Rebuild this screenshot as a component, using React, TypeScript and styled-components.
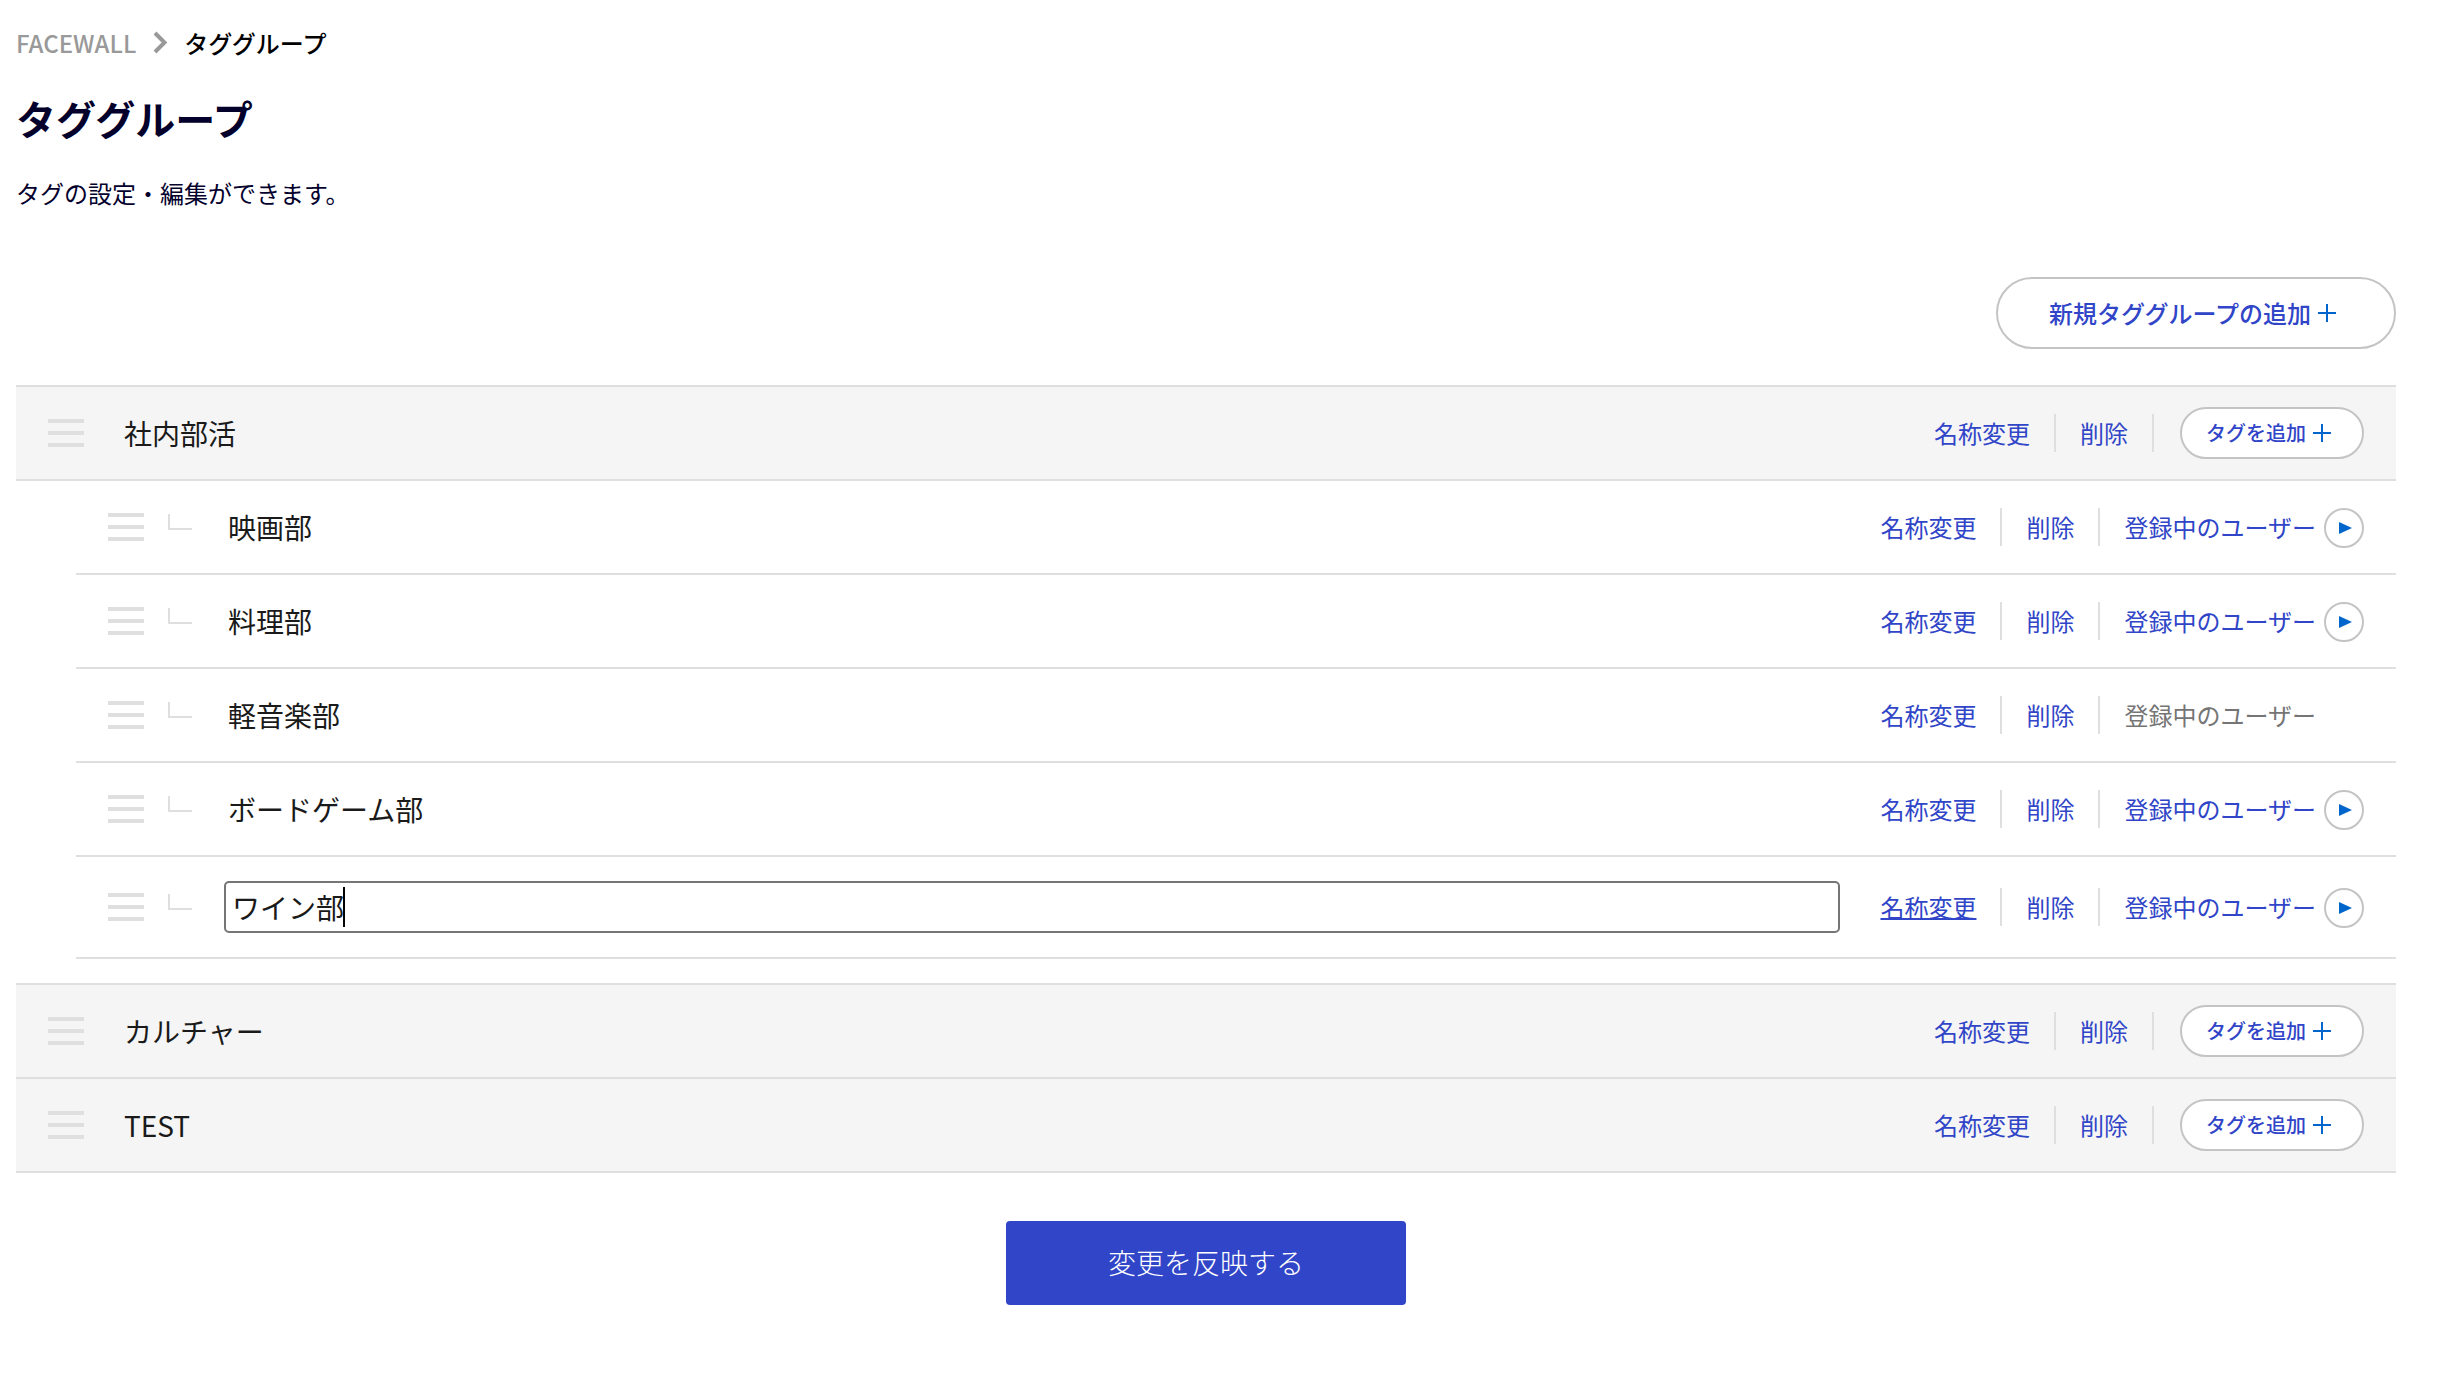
import React, { useState } from "react";
import styled, { createGlobalStyle, css } from "styled-components";

const color = {
  ink: "#1a1a1a",
  navy: "#03002c",
  link: "#3045c7",
  accent: "#0066cc",
  primary: "#3045c7",
  line: "#dfdfdf",
  pill: "#c4c4c4",
  groupBg: "#f5f5f5",
  muted: "#757575",
  crumb: "#999999",
};

const GlobalStyle = createGlobalStyle`
  *, *::before, *::after { box-sizing: border-box; }
  body {
    margin: 0;
    background: #fff;
    color: ${color.ink};
    font-family: "Noto Sans CJK JP", "Noto Sans", sans-serif;
    font-size: 24px;
    line-height: 36px;
  }
  button, input { font: inherit; }
`;

const Page = styled.main`
  padding: 25px 42px 90px 16px;
`;

const Breadcrumb = styled.nav`
  display: flex;
  align-items: center;
  gap: 16px;
  font-weight: 500;
`;

const CrumbLink = styled.a`
  color: ${color.crumb};
  text-decoration: none;
`;

const CrumbCurrent = styled.span`
  color: #000;
`;

const Title = styled.h1`
  margin: 27px 0;
  color: ${color.navy};
  font-size: 40px;
  font-weight: 700;
  line-height: 60px;
`;

const Lead = styled.p`
  margin: 0;
  color: ${color.navy};
`;

const Toolbar = styled.div`
  display: flex;
  justify-content: flex-end;
  margin: 66px 0 36px;
`;

const PillButton = styled.button<{ $large?: boolean }>`
  display: inline-flex;
  align-items: center;
  justify-content: center;
  width: ${(p) => (p.$large ? 400 : 184)}px;
  height: ${(p) => (p.$large ? 72 : 52)}px;
  margin-left: ${(p) => (p.$large ? 0 : 2)}px;
  padding: 0;
  border: 2px solid ${color.pill};
  border-radius: 36px;
  background: #fff;
  color: ${color.link};
  font-size: ${(p) => (p.$large ? 24 : 20)}px;
  font-weight: 500;
  white-space: nowrap;
  cursor: pointer;

  svg {
    margin: 0 7px;
  }
`;

const List = styled.ul`
  margin: 0;
  padding: 0;
  list-style: none;
`;

const GroupList = styled(List)`
  border-bottom: 2px solid ${color.line};
`;

const TagList = styled(List)`
  padding: 0 0 24px 60px;
`;

const rowBase = css`
  display: flex;
  align-items: center;
  min-height: 94px;
  padding: 0 32px;
`;

const GroupRow = styled.div`
  ${rowBase}
  gap: 40px;
  border-top: 2px solid ${color.line};
  background: ${color.groupBg};
`;

const TagRow = styled.div<{ $editing?: boolean }>`
  ${rowBase}
  gap: 24px;
  min-height: ${(p) => (p.$editing ? 102 : 94)}px;
  border-bottom: 2px solid ${color.line};
`;

const GroupTags = styled.div`
  border-top: 2px solid ${color.line};
`;

const Handle = styled.button`
  display: flex;
  flex: none;
  flex-direction: column;
  gap: 8px;
  width: 36px;
  padding: 0;
  border: 0;
  background: none;
  cursor: grab;
`;

const HandleBar = styled.span`
  height: 4px;
  width: 100%;
  background: ${color.line};
`;

const Elbow = styled.span`
  flex: none;
  width: 24px;
  height: 16px;
  margin-bottom: 10px;
  border-left: 2px solid ${color.line};
  border-bottom: 2px solid ${color.line};
`;

const Name = styled.span<{ $indent?: boolean }>`
  flex: 1;
  padding-left: ${(p) => (p.$indent ? 12 : 0)}px;
  font-size: 28px;
  line-height: 40px;
`;

const Field = styled.div`
  position: relative;
  flex: 1;
  margin: 0 16px 0 8px;
`;

const NameInput = styled.input`
  display: block;
  width: 100%;
  height: 52px;
  padding: 0 6px;
  border: 2px solid ${color.muted};
  border-radius: 5px;
  outline: 0;
  background: #fff;
  color: ${color.ink};
  font-size: 28px;
  line-height: 40px;
  caret-color: transparent;
`;

/* Sits right after the typed text: an invisible copy of it sets the place. */
const CaretTrack = styled.span`
  position: absolute;
  top: 6px;
  left: 7px;
  height: 40px;
  border-right: 2px solid #000;
  pointer-events: none;
`;

const HiddenCopy = styled.span`
  visibility: hidden;
  font-size: 28px;
  white-space: pre;
`;

const Actions = styled.div`
  display: flex;
  flex: none;
  align-items: center;
  gap: 24px;
`;

const Divider = styled.span`
  width: 2px;
  height: 38px;
  background: ${color.line};
`;

const TextButton = styled.button<{ $active?: boolean }>`
  padding: 0;
  border: 0;
  background: none;
  color: ${color.link};
  white-space: nowrap;
  text-decoration: ${(p) => (p.$active ? "underline" : "none")};
  text-decoration-thickness: 2px;
  cursor: pointer;
`;

const UsersLink = styled.a`
  display: flex;
  align-items: center;
  gap: 8px;
  color: ${color.link};
  text-decoration: none;
  white-space: nowrap;
`;

const UsersNone = styled.span`
  padding-right: 48px;
  color: ${color.muted};
  white-space: nowrap;
`;

const PlayCircle = styled.span`
  display: flex;
  align-items: center;
  justify-content: center;
  width: 40px;
  height: 40px;
  margin-top: 2px;
  padding-left: 2px;
  border: 2px solid ${color.pill};
  border-radius: 50%;
`;

const Footer = styled.div`
  display: flex;
  justify-content: center;
  margin-top: 48px;
`;

const SubmitButton = styled.button`
  width: 400px;
  height: 84px;
  padding: 0 0 2px;
  border: 0;
  border-radius: 4px;
  background: ${color.primary};
  color: #fff;
  font-size: 28px;
  font-weight: 300;
  cursor: pointer;
`;

const Plus = () => (
  <svg width="18" height="18" viewBox="0 0 18 18" aria-hidden="true">
    <path d="M9 0V18M0 9H18" stroke={color.accent} strokeWidth="2" />
  </svg>
);

const Chevron = () => (
  <svg width="16" height="24" viewBox="0 0 16 24" aria-hidden="true">
    <path d="M3 2L12.5 11.5L3 21" fill="none" stroke={color.crumb} strokeWidth="4" />
  </svg>
);

const Play = () => (
  <svg width="13" height="12" viewBox="0 0 13 12" aria-hidden="true">
    <path d="M0 0L13 6L0 12Z" fill={color.accent} />
  </svg>
);

const DragHandle = () => (
  <Handle type="button" aria-label="並べ替え">
    <HandleBar />
    <HandleBar />
    <HandleBar />
  </Handle>
);

type Tag = { name: string; hasUsers: boolean };
type Group = { name: string; tags: Tag[] };

const groups: Group[] = [
  {
    name: "社内部活",
    tags: [
      { name: "映画部", hasUsers: true },
      { name: "料理部", hasUsers: true },
      { name: "軽音楽部", hasUsers: false },
      { name: "ボードゲーム部", hasUsers: true },
      { name: "ワイン部", hasUsers: true },
    ],
  },
  { name: "カルチャー", tags: [] },
  { name: "TEST", tags: [] },
];

function TagItem({ tag, editing, onEdit }: { tag: Tag; editing: boolean; onEdit: () => void }) {
  const [name, setName] = useState(tag.name);
  return (
    <li>
      <TagRow $editing={editing}>
        <DragHandle />
        <Elbow />
        {editing ? (
          <Field>
            <NameInput aria-label="タグ名" value={name} onChange={(e) => setName(e.target.value)} />
            <CaretTrack aria-hidden="true">
              <HiddenCopy>{name}</HiddenCopy>
            </CaretTrack>
          </Field>
        ) : (
          <Name $indent>{name}</Name>
        )}
        <Actions>
          <TextButton type="button" $active={editing} onClick={onEdit}>
            名称変更
          </TextButton>
          <Divider />
          <TextButton type="button">削除</TextButton>
          <Divider />
          {tag.hasUsers ? (
            <UsersLink href="#users">
              登録中のユーザー
              <PlayCircle>
                <Play />
              </PlayCircle>
            </UsersLink>
          ) : (
            <UsersNone>登録中のユーザー</UsersNone>
          )}
        </Actions>
      </TagRow>
    </li>
  );
}

export default function App() {
  const [editing, setEditing] = useState("ワイン部");
  return (
    <>
      <GlobalStyle />
      <Page>
        <Breadcrumb aria-label="パンくず">
          <CrumbLink href="#facewall">FACEWALL</CrumbLink>
          <Chevron />
          <CrumbCurrent aria-current="page">タググループ</CrumbCurrent>
        </Breadcrumb>
        <Title>タググループ</Title>
        <Lead>タグの設定・編集ができます。</Lead>
        <Toolbar>
          <PillButton type="button" $large>
            新規タググループの追加
            <Plus />
          </PillButton>
        </Toolbar>
        <GroupList>
          {groups.map((group) => (
            <li key={group.name}>
              <GroupRow>
                <DragHandle />
                <Name>{group.name}</Name>
                <Actions>
                  <TextButton type="button">名称変更</TextButton>
                  <Divider />
                  <TextButton type="button">削除</TextButton>
                  <Divider />
                  <PillButton type="button">
                    タグを追加
                    <Plus />
                  </PillButton>
                </Actions>
              </GroupRow>
              {group.tags.length > 0 && (
                <GroupTags>
                  <TagList>
                    {group.tags.map((tag) => (
                      <TagItem
                        key={tag.name}
                        tag={tag}
                        editing={editing === tag.name}
                        onEdit={() => setEditing(tag.name)}
                      />
                    ))}
                  </TagList>
                </GroupTags>
              )}
            </li>
          ))}
        </GroupList>
        <Footer>
          <SubmitButton type="button">変更を反映する</SubmitButton>
        </Footer>
      </Page>
    </>
  );
}
